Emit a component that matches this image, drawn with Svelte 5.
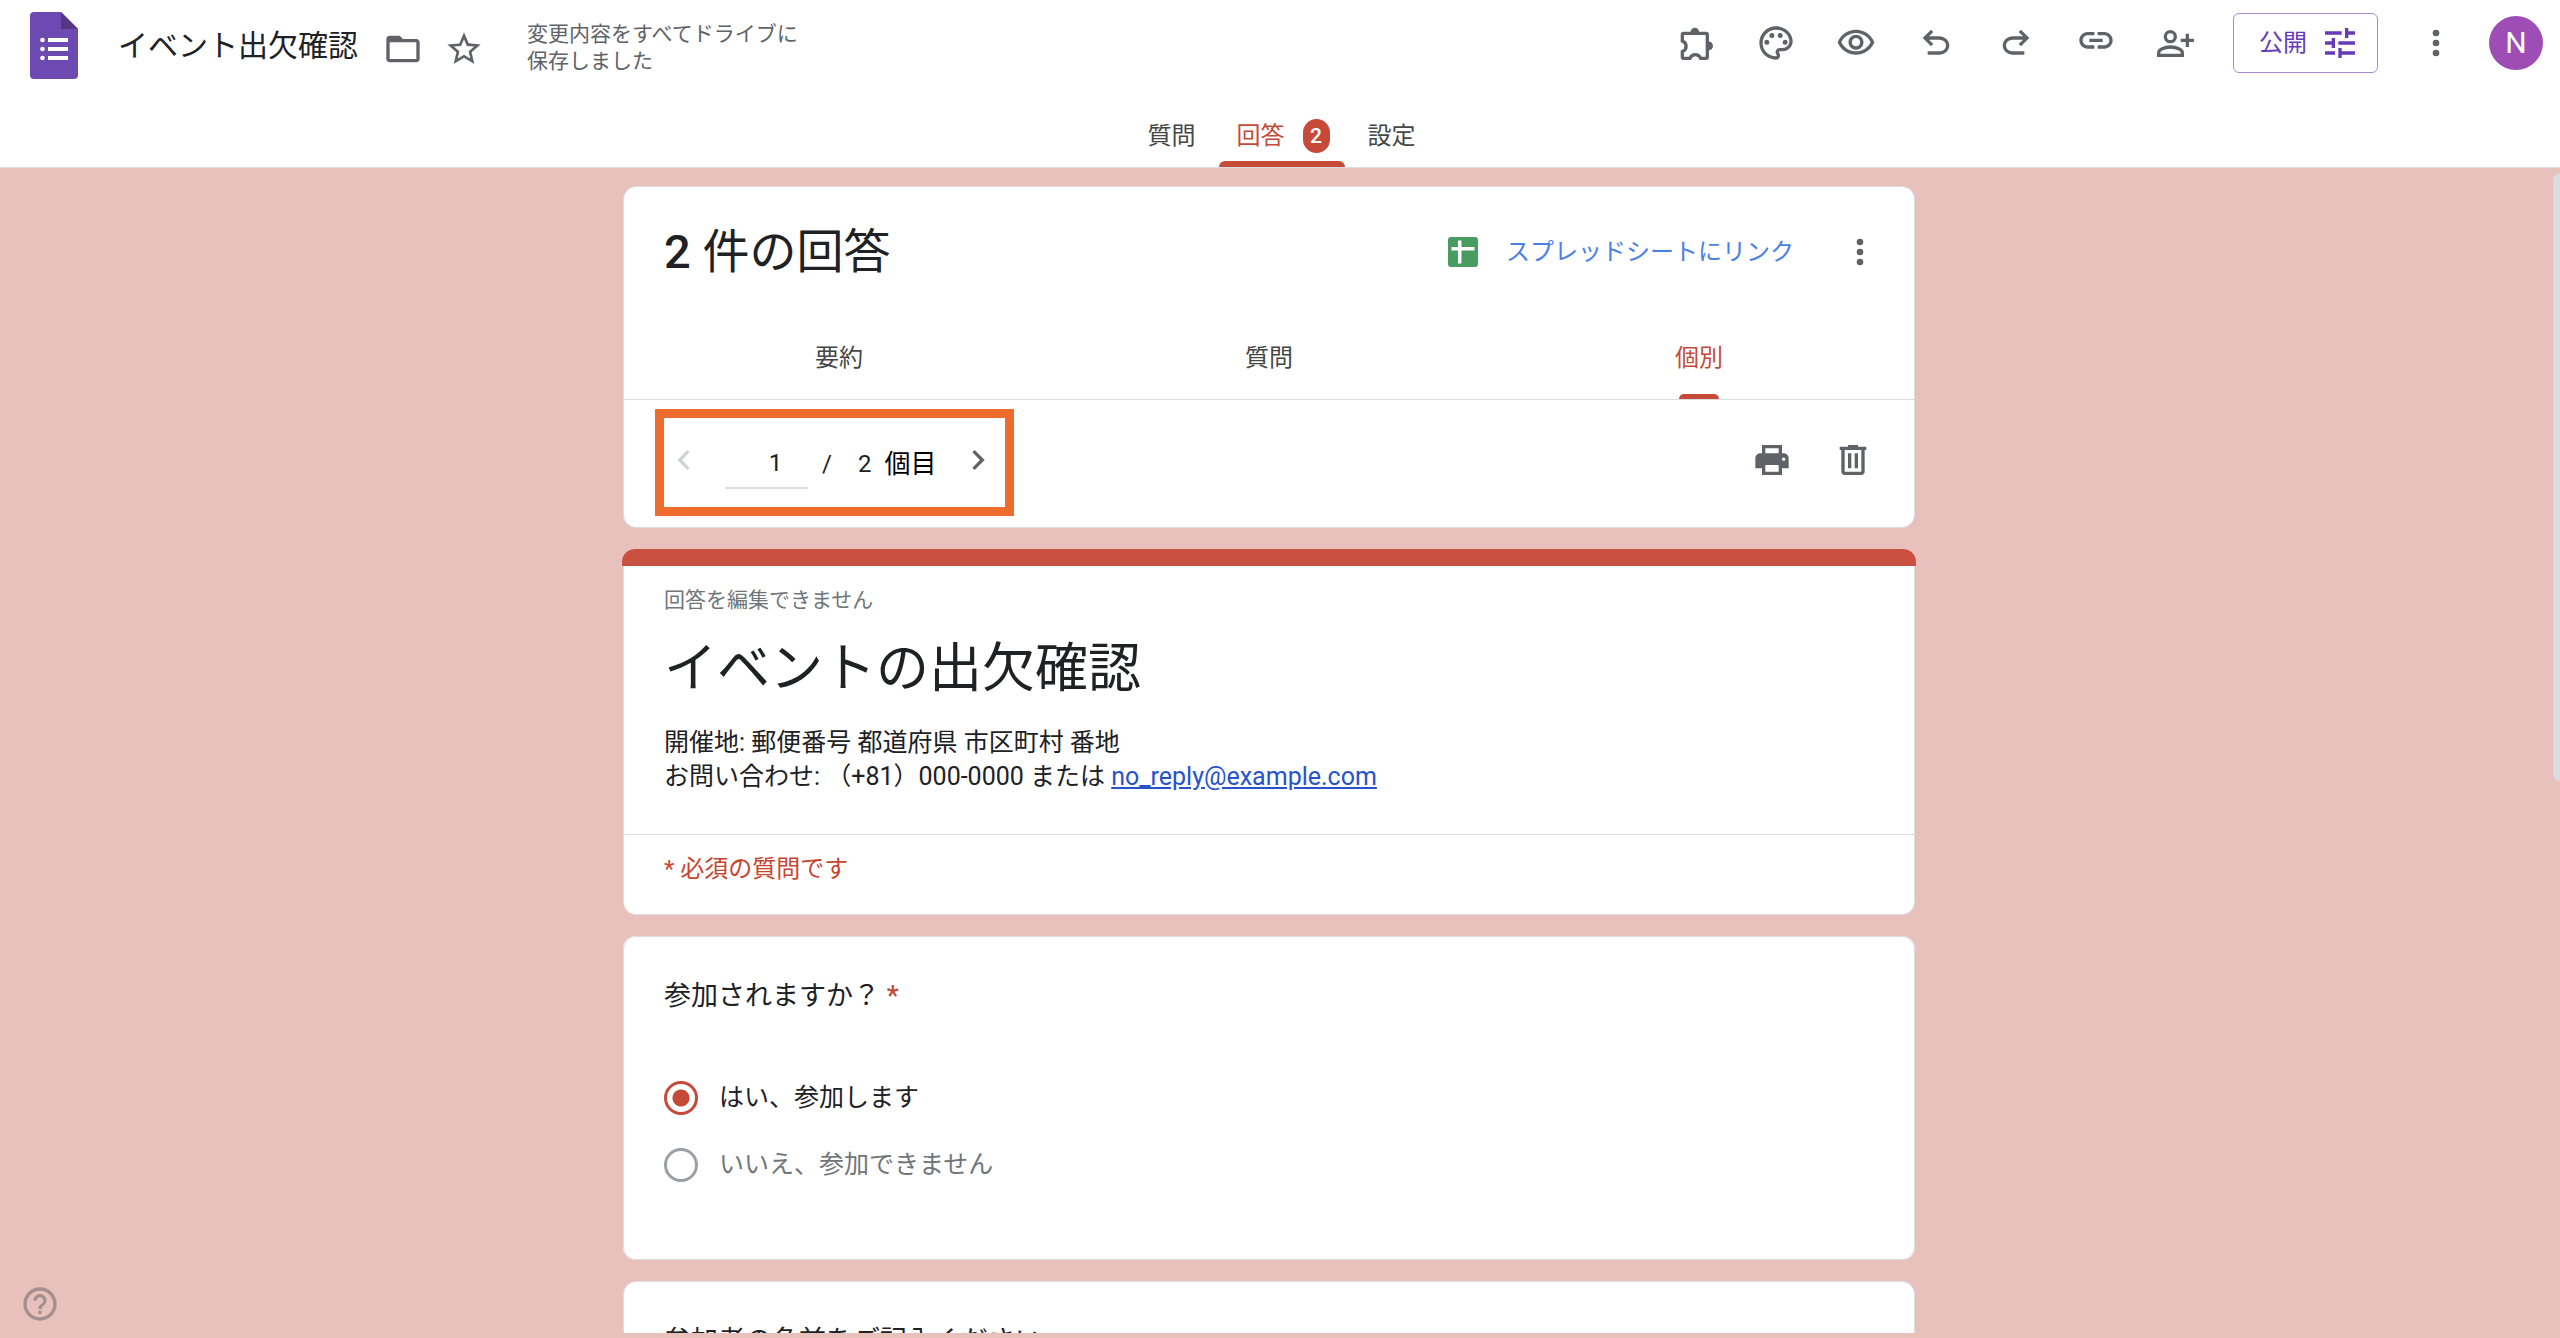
<script lang="ts">
  const ICONS: Record<string, string> = {
    folder: 'M20 6h-8l-2-2H4c-1.1 0-2 .9-2 2v12c0 1.1.9 2 2 2h16c1.1 0 2-.9 2-2V8c0-1.1-.9-2-2-2zm0 12H4V8h16v10z',
    star: 'M22 9.24l-7.19-.62L12 2 9.19 8.63 2 9.24l5.46 4.73L5.82 21 12 17.27 18.18 21l-1.63-7.03L22 9.24zM12 15.4l-3.76 2.27 1-4.28-3.32-2.88 4.38-.38L12 6.1l1.71 4.04 4.38.38-3.32 2.88 1 4.28L12 15.4z',
    palette: 'M12 22C6.49 22 2 17.51 2 12S6.49 2 12 2s10 4.04 10 9c0 3.31-2.69 6-6 6h-1.77c-.28 0-.5.22-.5.5 0 .12.05.23.13.33.41.47.64 1.06.64 1.67A2.5 2.5 0 0 1 12 22zm0-18c-4.41 0-8 3.59-8 8s3.59 8 8 8c.28 0 .5-.22.5-.5a.54.54 0 0 0-.14-.35c-.41-.46-.63-1.05-.63-1.65a2.5 2.5 0 0 1 2.5-2.5H16c2.21 0 4-1.79 4-4 0-3.86-3.59-7-8-7zM5 11.5a1.5 1.5 0 1 0 3 0 1.5 1.5 0 1 0-3 0zM8 7.5a1.5 1.5 0 1 0 3 0 1.5 1.5 0 1 0-3 0zM13 7.5a1.5 1.5 0 1 0 3 0 1.5 1.5 0 1 0-3 0zM16 11.5a1.5 1.5 0 1 0 3 0 1.5 1.5 0 1 0-3 0z',
    eye: 'M12 6c3.79 0 7.17 2.13 8.82 5.5C19.17 14.87 15.79 17 12 17s-7.17-2.13-8.82-5.5C4.83 8.13 8.21 6 12 6m0-2C7 4 2.73 7.11 1 11.5 2.73 15.89 7 19 12 19s9.27-3.11 11-7.5C21.27 7.11 17 4 12 4zm0 5c1.38 0 2.5 1.12 2.5 2.5S13.38 14 12 14s-2.5-1.12-2.5-2.5S10.62 9 12 9m0-2c-2.48 0-4.5 2.02-4.5 4.5S9.52 16 12 16s4.5-2.02 4.5-4.5S14.48 7 12 7z',
    undo: 'M7 19v-2h7.1q1.575 0 2.738-1Q18 15 18 13.5T16.838 11 14.1 10H7.8l2.6 2.6L9 14 4 9l5-5 1.4 1.4L7.8 8h6.3q2.425 0 4.163 1.575Q20 11.15 20 13.5t-1.737 3.925Q16.525 19 14.1 19z',
    redo: 'M17 19v-2H9.9q-1.575 0-2.738-1Q6 15 6 13.5T7.162 11 9.9 10h6.3l-2.6 2.6L15 14l5-5-5-5-1.4 1.4L16.2 8H9.9Q7.475 8 5.737 9.575 4 11.15 4 13.5t1.737 3.925Q7.475 19 9.9 19z',
    link: 'M17 5.4h-4v2h4c1.65 0 3 1.35 3 3s-1.35 3-3 3h-4v2h4c2.76 0 5-2.24 5-5s-2.24-5-5-5zm-6 8H7c-1.65 0-3-1.35-3-3s1.35-3 3-3h4v-2H7c-2.76 0-5 2.24-5 5s2.24 5 5 5h4v-2zm-3-4h8v2H8z',
    tune: 'M3 17v2h6v-2H3zM3 5v2h10V5H3zm10 16v-2h8v-2h-8v-2h-2v6h2zM7 9v2H3v2h4v2h2V9H7zm14 4v-2H11v2h10zm-6-4h2V7h4V5h-4V3h-2v6z',
    more: 'M12 8a2 2 0 1 0 0-4 2 2 0 0 0 0 4zm0 2a2 2 0 1 0 0 4 2 2 0 0 0 0-4zm0 6a2 2 0 1 0 0 4 2 2 0 0 0 0-4z',
    print: 'M19 8h-1V3H6v5H5c-1.66 0-3 1.34-3 3v6h4v4h12v-4h4v-6c0-1.66-1.34-3-3-3zM8 5h8v3H8V5zm8 14H8v-4h8v4zm2-7.5c0-.55.45-1 1-1s1 .45 1 1-.45 1-1 1-1-.45-1-1z',
    trash: 'M15 4V3H9v1H4v2h1v13c0 1.1.9 2 2 2h10c1.1 0 2-.9 2-2V6h1V4h-5zm2 15H7V6h10v13zM9 8h2v9H9zm4 0h2v9h-2z',
    prev: 'M15.41 7.41 14 6l-6 6 6 6 1.41-1.41L10.83 12z',
    next: 'M8.59 16.59 10 18l6-6-6-6-1.41 1.41L13.17 12z',
    help: 'M11 18h2v-2h-2v2zm1-16C6.48 2 2 6.48 2 12s4.48 10 10 10 10-4.48 10-10S17.52 2 12 2zm0 18c-4.41 0-8-3.59-8-8s3.59-8 8-8 8 3.59 8 8-3.59 8-8 8zm0-14c-2.21 0-4 1.79-4 4h2c0-1.1.9-2 2-2s2 .9 2 2c0 2-3 1.75-3 5h2c0-2.25 3-2.5 3-5 0-2.21-1.79-4-4-4z',
  }

  const tools = [
    { icon: 'addon', label: 'アドオン' },
    { icon: 'palette', label: 'テーマをカスタマイズ' },
    { icon: 'eye', label: 'プレビュー' },
    { icon: 'undo', label: '元に戻す' },
    { icon: 'redo', label: 'やり直し' },
    { icon: 'link', label: 'リンクをコピー' },
    { icon: 'person', label: '共有' },
  ]
  const views = ['要約', '質問', '個別']
  const options = ['はい、参加します', 'いいえ、参加できません']

  let view = $state('個別')
  let answer = $state(options[0])
  let page = $state('1')
</script>

{#snippet icon(name: string)}
  <svg class="icon" viewBox="0 0 24 24" aria-hidden="true">
    {#if name === 'addon'}
      <path class="line" d="M3.8 7q0-.8.8-.8H18q.8 0 .8.8v13.4q0 .8-.8.8h-3.2a3.4 3.4 0 0 0-6.4 0H4.6q-.8 0-.8-.8v-3.2a3.4 3.4 0 0 0 0-6.4z" />
      <path d="M8.7 5.4a2.6 2.6 0 0 1 5.2 0zM19.6 11.1a2.6 2.6 0 0 1 0 5.2z" />
    {:else if name === 'person'}
      <circle class="line" cx="8.6" cy="8.2" r="3" />
      <path class="line" d="M1.6 19.4V18c0-1.2.8-2 1.8-2.4q2.6-1.2 5.3-1.2t5.3 1.2c1 .4 1.8 1.2 1.8 2.4v1.4zM14.8 10.4h8M18.8 6.4v8" />
    {:else}
      <path fill-rule="evenodd" d={ICONS[name]} />
    {/if}
  </svg>
{/snippet}

<div class="app">
  <header>
    <div class="topbar">
      <div class="doc">
        <svg class="logo" viewBox="0 0 48 67" aria-hidden="true">
          <path fill="#6c4ab1" d="M4 0h27l17 17v46a4 4 0 0 1-4 4H4a4 4 0 0 1-4-4V4a4 4 0 0 1 4-4z" />
          <path fill="#533684" d="M31 0l17 17H31z" />
          <path fill="#fff" d="M18 26h20v4H18zM18 35h20v4H18zM18 44h20v4H18z" />
          <circle fill="#fff" cx="12.5" cy="28" r="2.3" />
          <circle fill="#fff" cx="12.5" cy="37" r="2.3" />
          <circle fill="#fff" cx="12.5" cy="46" r="2.3" />
        </svg>
        <span class="doc-name">イベント出欠確認</span>
        <div class="doc-actions">
          <button aria-label="移動">{@render icon('folder')}</button>
          <button aria-label="スターを付ける">{@render icon('star')}</button>
        </div>
        <p class="status">変更内容をすべてドライブに<br />保存しました</p>
      </div>
      <div class="tools">
        <div class="tool-icons">
          {#each tools as tool}
            <button aria-label={tool.label}>{@render icon(tool.icon)}</button>
          {/each}
        </div>
        <button class="publish">公開 {@render icon('tune')}</button>
        <button class="more" aria-label="その他">{@render icon('more')}</button>
        <button class="avatar">N</button>
      </div>
    </div>
    <nav class="tabs">
      <button class="tab">質問</button>
      <button class="tab active">回答 <span class="badge">2</span></button>
      <button class="tab">設定</button>
    </nav>
  </header>

  <main>
    <div class="column">
      <section class="card">
        <div class="summary">
          <h1><span class="count">2</span> 件の回答</h1>
          <a class="sheet-link" href="#sheet">
            <svg class="sheet" viewBox="0 0 30 30" aria-hidden="true">
              <rect width="30" height="30" rx="3" fill="#489c5f" />
              <path d="M11.7 3.5v23M3.5 11.7h23" stroke="#fff" stroke-width="3.5" />
            </svg>
            スプレッドシートにリンク
          </a>
          <button aria-label="その他のオプション">{@render icon('more')}</button>
        </div>
        <div class="views">
          {#each views as name}
            <button class="view" class:active={view === name} onclick={() => (view = name)}>{name}</button>
          {/each}
        </div>
        <div class="pager-row">
          <div class="pager">
            <button aria-label="前へ" disabled>{@render icon('prev')}</button>
            <input class="page-input" aria-label="回答の番号" bind:value={page} />
            <span class="slash">/</span>
            <span class="total">2</span>
            <span class="unit">個目</span>
            <button aria-label="次へ">{@render icon('next')}</button>
          </div>
          <div class="response-actions">
            <button aria-label="印刷">{@render icon('print')}</button>
            <button aria-label="削除">{@render icon('trash')}</button>
          </div>
        </div>
      </section>

      <section class="card form-head">
        <div class="stripe"></div>
        <div class="form-info">
          <p class="note">回答を編集できません</p>
          <h2>イベントの出欠確認</h2>
          <p class="desc">
            開催地: 郵便番号 都道府県 市区町村 番地<br />
            お問い合わせ: （+81）000-0000 または <a href="mailto:no_reply@example.com">no_reply@example.com</a>
          </p>
        </div>
        <p class="required-note">* 必須の質問です</p>
      </section>

      <fieldset class="card question">
        <legend>参加されますか？ <span class="star">*</span></legend>
        <div class="options">
          {#each options as option}
            <label class:picked={answer === option}>
              <input type="radio" name="attend" value={option} bind:group={answer} />
              {option}
            </label>
          {/each}
        </div>
      </fieldset>

      <section class="card question">
        <h3>参加者の名前をご記入ください</h3>
      </section>
    </div>
    <div class="scroll-thumb"></div>
    <button class="help" aria-label="ヘルプ">{@render icon('help')}</button>
  </main>
</div>

<style>
  :global(body) { margin: 0; background: #e8c0bc; }
  .app {
    height: 100vh; display: flex; flex-direction: column; overflow: hidden;
    box-sizing: border-box; padding-bottom: 5px;
    font-family: Roboto, "Noto Sans CJK JP", sans-serif; font-size: 24px; line-height: 34px; color: #202124;
  }
  h1, h2, h3, p { margin: 0; font-weight: 400; }
  button {
    display: flex; align-items: center; justify-content: center;
    border: 0; padding: 0; background: none; font: inherit; color: #5f6368; cursor: pointer;
  }
  .icon { width: 40px; height: 40px; display: block; fill: currentColor; flex-shrink: 0; }
  .line { fill: none; stroke: currentColor; stroke-width: 2; }

  header { background: #fff; border-bottom: 1px solid #dadce0; }
  .topbar { display: flex; justify-content: space-between; align-items: flex-start; padding: 12px 17px 0 30px; }
  .doc { display: flex; align-items: center; }
  .logo { width: 48px; height: 67px; }
  .doc-name { margin-left: 40px; font-size: 30px; }
  .doc-actions { display: flex; gap: 21px; margin-left: 25px; padding-top: 6px; }
  .status { margin-left: 43px; padding-top: 5px; font-size: 21px; line-height: 27px; color: #5f6368; }
  .tools { display: flex; align-items: center; height: 61px; }
  .tool-icons { display: flex; gap: 40px; margin-right: 37px; }
  .publish {
    box-sizing: border-box; height: 60px; padding: 0 17px 0 25px; gap: 13px;
    border: 1px solid #a78bd9; border-radius: 6px; color: #673ab7;
  }
  .more { margin-left: 38px; }
  .avatar { width: 54px; height: 54px; margin-left: 33px; border-radius: 50%; background: #9e4db5; color: #fff; font-size: 30px; }

  .tabs { display: flex; justify-content: center; gap: 5px; margin-top: 37px; padding-left: 3px; }
  .tab { position: relative; height: 51px; padding: 0 18px 12px; color: #444746; }
  .tab.active { padding-right: 15px; color: #c54a38; }
  .tab.active::after {
    content: ''; position: absolute; left: 0; right: 0; bottom: 0; height: 6px;
    border-radius: 6px 6px 0 0; background: #c54a38;
  }
  .badge { width: 27px; margin-left: 18px; border-radius: 14px; background: #c54a38; color: #fff; font-size: 21px; font-weight: 500; }

  main { position: relative; flex: 1; min-height: 0; overflow: hidden; padding: 18px 22px 0 0; }
  .column { display: flex; flex-direction: column; gap: 21px; max-width: 1292px; margin: 0 auto; }
  .card { margin: 0; padding: 0; background: #fff; border: 1px solid #dadce0; border-radius: 13px; }

  .summary { display: flex; align-items: center; height: 130px; padding: 0 34px 0 40px; }
  h1 { flex: 1; font-size: 47px; line-height: 64px; }
  .count { font-weight: 500; }
  .sheet-link { display: flex; align-items: center; gap: 28px; margin-right: 46px; color: #4a7ee8; text-decoration: none; }
  .sheet { width: 30px; height: 30px; }
  .views { display: grid; grid-template-columns: repeat(3, 1fr); border-bottom: 1px solid #dadce0; }
  .view { position: relative; height: 82px; color: #444746; }
  .view.active { color: #c54a38; }
  .view.active::after {
    content: ''; position: absolute; left: calc(50% - 20px); bottom: 0; width: 40px; height: 5px;
    border-radius: 5px 5px 0 0; background: #c54a38;
  }
  .pager-row { display: flex; align-items: center; justify-content: space-between; padding: 9px 41px 11px 31px; }
  .pager {
    display: flex; align-items: center; box-sizing: border-box; height: 107px; padding: 2px 7px 0 0;
    border: 9px solid #ed6c2e;
  }
  .pager button { padding-bottom: 7px; }
  .pager button:disabled { color: #d0d2d5; }
  .page-input {
    box-sizing: border-box; width: 83px; height: 50px; margin-left: 21px; padding: 0 0 0 18px;
    border: 0; border-bottom: 2px solid #dadce0; background: none;
    font: inherit; color: inherit; text-align: center;
  }
  .slash { margin-left: 14px; }
  .total { margin-left: 26px; }
  .unit { margin: 0 22px 0 13px; font-size: 26px; color: #000; }
  .response-actions { display: flex; gap: 41px; padding-bottom: 5px; }

  .form-head { border-top: 0; }
  .stripe { height: 17px; margin: 0 -2px; border-radius: 13px 13px 0 0; background: #c95040; }
  .form-info { padding: 17px 40px 40px; border-bottom: 1px solid #dadce0; }
  .note { font-size: 21px; color: #70757a; }
  h2 { margin-top: 20px; font-size: 53px; line-height: 64px; }
  .desc { margin-top: 25px; font-size: 25px; }
  .desc a { color: #2653cc; }
  .required-note { padding: 17px 40px 28px; color: #c9452f; }

  .question { padding: 42px 40px 77px; }
  .question legend, .question h3 { float: left; width: 100%; padding: 0; font-size: 27px; }
  .star { color: #c9452f; font-weight: 500; }
  .options { clear: both; display: grid; gap: 33px; padding-top: 68px; font-size: 25px; }
  .options label { display: flex; align-items: center; gap: 21px; color: #70757a; }
  .options label.picked { color: #202124; }
  .options input {
    appearance: none; box-sizing: border-box; width: 34px; height: 34px; margin: 0;
    border: 3px solid #9aa0a6; border-radius: 50%;
  }
  .options input:checked {
    border-color: #c54a38; background: radial-gradient(circle, #c54a38 8px, transparent 9px);
  }

  .scroll-thumb { position: absolute; top: 5px; right: 0; width: 7px; height: 608px; border-radius: 7px 0 0 7px; background: #dadce0; }
  .help { position: absolute; left: 20px; bottom: 9px; color: #a58f8e; }
</style>
